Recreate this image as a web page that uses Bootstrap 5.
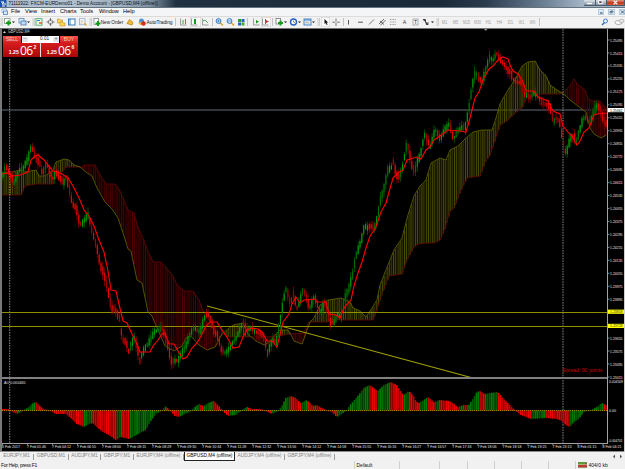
<!DOCTYPE html>
<html lang="en">
<head>
    <meta charset="UTF-8">
    <meta name="viewport" content="width=device-width, initial-scale=1.0">
    <title>FXCM-EURDemo01 - Demo Account</title>
    <link href="https://cdn.jsdelivr.net/npm/bootstrap@5.3.0/dist/css/bootstrap.min.css" rel="stylesheet">
    <style>
        body {
            font-family: "Liberation Sans", Arial, sans-serif;
            font-size: 5px;
            line-height: 1;
            color: #111;
            background: #f0f0f0;
            width: 625px;
            height: 469px;
            overflow: hidden;
            white-space: nowrap;
        }
        svg { display: block; }
        .titlebar {
            height: 8px;
            background: linear-gradient(90deg, #a9bccd 0, #b4c4d2 60px, #9fb0c0 120px, #7d91a3 150px, #1f3040 176px, #1b2a39 440px, #2a3b4d 485px, #6d8194 545px, #a3b4c5 582px, #9fb0c1 100%);
            border-bottom: 1px solid #66727d;
        }
        .win-btn { height: 6px; width: 11.5px; background: linear-gradient(#dde3ea, #8494a6); border: solid #4d5c6c; border-width: 0 1px 1px 0; }
        .win-close { width: 18px; background: linear-gradient(#e39b84, #c2381c 55%, #d85c36); }
        .menubar { height: 9px; background: #f4f5f7; border-bottom: 1px solid #dcdcdc; }
        .menu-items { display: grid; grid-template-columns: 14px 16px 19px 20px 19px 24px 20px; font-size: 5.6px; color: #000; }
        .mdi-btn { width: 6.5px; height: 6px; background: #dbe8f5; border: 1px solid #b7cbdf; }
        .toolbar { height: 11px; background: #f2f2f2; }
        .tool { height: 10px; flex: none; overflow: hidden; }
        .chart-area { height: 424px; background: #000; }
        .one-click { left: 3px; top: 8px; width: 75px; color: #fff; }
        .oc-btn { width: 18px; height: 7px; background: linear-gradient(#f4504b, #d0201f); color: #f3c9c6; font-size: 5px; }
        .oc-lot { height: 7px; background: #fff; color: #222; font-size: 4.6px; margin: 0 1px; }
        .oc-step { width: 6px; height: 5px; background: #e1e4e8; color: #555; }
        .oc-price { height: 14px; background: linear-gradient(#d51c1c, #a90808); font-size: 5.2px; font-weight: bold; padding: 0 2px 1.5px 4px; }
        .oc-big { font-size: 12px; line-height: 10px; font-weight: normal; font-family: "Open Sans", sans-serif; padding: 0 1px; letter-spacing: -.6px; }
        .oc-sup { font-size: 5px; padding-bottom: 6px; }
        .tabs-row { height: 9px; background: #f0f0f0; color: #808080; font-size: 4.85px; }
        .tab-item { height: 6px; border-right: 1px solid #9a9a9a; flex: none; }
        .tab-active { height: 8.5px; background: #fff; color: #000; border: 1px solid #222; border-top: 0; align-self: flex-start; padding-top: 1.5px; }
        .statusbar { height: 8px; background: #f1f1f1; font-size: 5px; }
        .help-hint { width: 354px; letter-spacing: -.3px; padding-left: 1px; }
        .status-cell { height: 8px; border-left: 1px solid #cfcfcf; padding-left: 1.5px; flex: none; }
    </style>
</head>
<body>
    <div class="titlebar d-flex align-items-center">
        <svg width="7" height="7" viewBox="0 0 7 7"><rect width="6.5" height="7" fill="#1c52b0"/><path d="M1 2h3l-2 2h4M2 6h3" stroke="#fff" fill="none"/></svg>
        <svg width="155" height="7"><text x="1.5" y="5.4" font-size="5.4" fill="#0a0f14" textLength="149" lengthAdjust="spacingAndGlyphs">71111922: FXCM-EURDemo01 - Demo Account - [GBPUSD,M4 (offline)]</text></svg>
        <div class="d-flex ms-auto align-self-start">
            <div class="win-btn d-flex align-items-center justify-content-center"><svg width="5" height="5"><path d="M0 3.5h5" stroke="#fff" stroke-width="1.3"/></svg></div>
            <div class="win-btn d-flex align-items-center justify-content-center"><svg width="5" height="5"><rect x=".7" y=".7" width="3.5" height="3" stroke="#fff" fill="#555"/></svg></div>
            <div class="win-btn win-close d-flex align-items-center justify-content-center"><svg width="5" height="5"><path d="M.7 .7l3.6 3.6M4.3 .7L.7 4.3" stroke="#fff" stroke-width="1.2"/></svg></div>
        </div>
    </div>
    <div class="menubar d-flex align-items-center">
        <svg width="11" height="8" viewBox="0 0 11 8"><rect x="2" y="1" width="4.5" height="3.5" fill="#fff" stroke="#86a9d0" stroke-width=".8"/><rect x="3.5" y="3" width="4" height="3.5" fill="#dbe9f8" stroke="#4b80bd" stroke-width=".8"/></svg>
        <div class="menu-items">
            <span>File</span><span>View</span><span>Insert</span><span>Charts</span><span>Tools</span><span>Window</span><span>Help</span>
        </div>
        <div class="d-flex ms-auto gap-0" id="mdi">
            <div class="mdi-btn me-1"><svg width="5" height="4"><path d="M1 3h2.5" stroke="#245"/></svg></div>
            <div class="mdi-btn"><svg width="5" height="4"><path d="M1 3V1.5h2V3zM2 1h2v1.5" stroke="#245" fill="none" stroke-width=".6"/></svg></div>
            <div class="mdi-btn ms-1"><svg width="5" height="4"><path d="M1 .5l3 3M4 .5l-3 3" stroke="#245" stroke-width=".8"/></svg></div>
        </div>
    </div>
    <div class="toolbar d-flex" id="toolbar"></div>

    <div class="chart-area position-relative">
        <svg id="chart" width="625" height="424" viewBox="0 28 625 424" font-family="Liberation Sans, Arial, sans-serif"></svg>
        <div class="one-click position-absolute">
            <div class="d-flex">
                <div class="oc-btn d-flex align-items-center justify-content-center">SELL</div>
                <div class="oc-lot d-flex align-items-center justify-content-between flex-grow-1 px-0">
                    <div class="oc-step d-flex align-items-center justify-content-center">-</div>
                    <span class="ms-auto">0.01</span>
                    <div class="oc-step d-flex align-items-center justify-content-center ms-1">+</div>
                </div>
                <div class="oc-btn d-flex align-items-center justify-content-center">BUY</div>
            </div>
            <div class="row g-0">
                <div class="col oc-price d-flex align-items-end justify-content-center">1.25<span class="oc-big">06</span><span class="oc-sup">2</span></div>
                <div class="col oc-price d-flex align-items-end justify-content-center border-start border-black">1.25<span class="oc-big">06</span><span class="oc-sup">6</span></div>
            </div>
        </div>
    </div>

    <div class="tabs-row d-flex align-items-center" id="tabs"></div>
    <div class="statusbar d-flex align-items-center" id="status"></div>

    <script>
        // ---------- toolbar ----------
        // each entry: [slot width, drawing inside a slot 10px high]
        const grip = '<path d="M1 1v8M2.5 1v8" stroke="#c3c3c3" stroke-width=".8"/>';
        const sep = '<path d="M1.5 1v8" stroke="#b5b5b5" stroke-width=".8"/>';
        const caret = '<path d="M0 4.4h3l-1.5 1.7z" fill="#111"/>';
        const axis = '<path d="M1.5 1.5v6.5h6" stroke="#7d8a84" fill="none" stroke-width=".8"/>';
        const press = w => `<rect x="0" y="0" width="${w}" height="10" fill="#fafafa" stroke="#bcbcbc" stroke-width=".8"/>`;
        const label = (t, x, w, c = '#111', s = 5.3) => `<text x="${x}" y="6.9" font-size="${s}" fill="${c}" textLength="${w}" lengthAdjust="spacingAndGlyphs">${t}</text>`;
        const tools = [
            [3, grip],
            [9, '<rect x="1.5" y="1.5" width="5.5" height="5" fill="#fff" stroke="#7c9886" stroke-width=".8"/><path d="M3 6h5M5.5 3.5v5" stroke="#159a1c" stroke-width="2"/>'],
            [6, caret],
            [9, '<rect x="1" y="1.5" width="5" height="4.5" fill="#e9f3ff" stroke="#5a85b5" stroke-width=".8"/><rect x="3" y="4" width="5" height="4" fill="#c4dcf5" stroke="#4175ae" stroke-width=".8"/>'],
            [5, caret],
            [3, grip],
            [10, '<rect x="1" y="1.7" width="6" height="6.5" fill="#e9fbe9" stroke="#38a35a" stroke-width=".8"/><path d="M2 3.5h3" stroke="#3b7bd0"/><path d="M4 6h3" stroke="#dd5a2b" stroke-width="1.5"/>'],
            [11, '<circle cx="5.5" cy="5" r="2.3" stroke="#777" fill="none" stroke-width=".8"/><path d="M5.5 1v3M5.5 6v3M1.5 5h3M6.5 5h3" stroke="#555" stroke-width=".8"/>'],
            [11, '<path d="M1.5 2h2l1 1h2v3h-5z" fill="#f6d46a" stroke="#c49722" stroke-width=".7"/><path d="M4 5h2l1 1h2v3H4z" fill="#ffd94f" stroke="#c49722" stroke-width=".7"/>'],
            [11, '<rect x="1.5" y="2" width="6.5" height="6" fill="#fff" stroke="#3a7ab9"/><path d="M3 2v6" stroke="#3a7ab9"/>'],
            [11, '<rect x="1.5" y="1.7" width="5.5" height="6" fill="#fff" stroke="#88aacc" stroke-width=".8"/><path d="M2.5 4h3M2.5 6h2" stroke="#b3977b" stroke-width=".8"/><path d="M6 6l2.5 2.5" stroke="#d2a72c" stroke-width="1.3"/>'],
            [3, grip],
            [33, '<rect x="2" y="1.5" width="4.5" height="6" fill="#fff" stroke="#778" stroke-width=".7"/><path d="M3.5 6.5h5M6 4v5" stroke="#159a1c" stroke-width="2"/>' + label('New Order', 8.7, 22.5)],
            [12, '<path d="M2 6.5l2.5-4 3.5 3-1 2.5z" fill="#f0bd38" stroke="#b57d17" stroke-width=".8"/>'],
            [37, '<circle cx="4.5" cy="4" r="2.5" fill="#4c93d8"/><path d="M1 5.5h6v2.5H3z" fill="#e8b83a"/><circle cx="6.5" cy="6.5" r="2.2" fill="#d9291c"/>' + label('AutoTrading', 9.5, 26)],
            [5, sep],
            [11, axis + '<path d="M4 3v4M6.5 2v5" stroke="#219536" stroke-width=".9"/>'],
            [11, press(11) + axis + '<path d="M5 2v5" stroke="#159a1c" stroke-width="2"/>'],
            [10, axis + '<path d="M2 4l2-1 3 3" stroke="#219536" fill="none" stroke-width=".8"/>'],
            [4, sep],
            [11, '<path d="M5 5.5l3 3" stroke="#d6a426" stroke-width="1.5"/><circle cx="3.5" cy="4" r="2.4" fill="#dcefff" stroke="#2e77c1"/><path d="M2.2 4h2.6M3.5 2.7v2.6" stroke="#2e77c1" stroke-width=".8"/>'],
            [12, '<path d="M5 5.5l3 3" stroke="#d6a426" stroke-width="1.5"/><circle cx="3.5" cy="4" r="2.4" fill="#dcefff" stroke="#2e77c1"/><path d="M2.2 4h2.6" stroke="#2e77c1" stroke-width=".8"/>'],
            [8, '<rect x="0" y="2" width="3" height="3" fill="#2a9c39"/><rect x="3.5" y="2" width="3" height="3" fill="#2464c2"/><rect x="0" y="5.5" width="3" height="3" fill="#2464c2"/><rect x="3.5" y="5.5" width="3" height="3" fill="#46a92e"/>'],
            [6, sep],
            [9, axis + '<path d="M4 3v3.5l3-1.7z" fill="#159a1c"/>'],
            [10, press(10) + axis + '<path d="M4.5 2v5" stroke="#3d6fb5"/><path d="M5 3v3l3-1.5z" fill="#c33"/>'],
            [4, sep],
            [9, '<rect x="1" y="1.5" width="4.5" height="5.5" fill="#fff" stroke="#777" stroke-width=".8"/><path d="M3 6h5M5.5 3.5v5" stroke="#159a1c" stroke-width="2"/>'],
            [5, caret],
            [9, '<circle cx="4.5" cy="5" r="3" fill="#fff" stroke="#2061c4" stroke-width="1.4"/><path d="M4.5 3.5V5l1.5 1" stroke="#555" fill="none" stroke-width=".7"/>'],
            [5, caret],
            [9, '<rect x="1" y="2" width="7" height="6" fill="#dceafa" stroke="#4b86c5"/><path d="M1 3h7" stroke="#4b86c5"/><path d="M2.5 6l1.5-1 2 1.5" stroke="#b68a41" fill="none" stroke-width=".7"/>'],
            [5, caret],
            [4, grip],
            [9, press(9) + '<path d="M3.5 2v5l1.2-1 1 2 .9-.4-1-2h1.5z" fill="#111"/>'],
            [12, '<path d="M6 1.5v3M6 6v3M2.3 5.2h3M6.8 5.2h3" stroke="#555" stroke-width=".8"/>'],
            [3, sep],
            [11, '<path d="M3.5 3v4.5" stroke="#444" stroke-width=".9"/>'],
            [12, '<path d="M2 5.2h5" stroke="#444" stroke-width=".9"/>'],
            [10, '<path d="M1 7.5l5-5" stroke="#555" stroke-width=".8"/>'],
            [11, '<path d="M1 7l5-5M2.5 8.2l5-5M2 4l4 3.5" stroke="#444" stroke-width=".8"/>'],
            [12, '<path d="M1 2.5h6M1 5h6M1 7.5h6" stroke="#777" stroke-width=".7" stroke-dasharray="1 .6"/>'],
            [11, label('A', 1.7, 3.5, '#333', 5.5)],
            [10, '<rect x="1" y="2" width="5" height="6" fill="none" stroke="#888" stroke-width=".6"/>' + label('T', 2, 3, '#333', 5)],
            [9, '<path d="M1 2.5l2.5 0 0 2zM3 4l3 3.5h-2M6 5v2.5" fill="#333" stroke="#333" stroke-width=".8"/>'],
            [5, caret],
            [3, grip]
        ];
        ['M1', 'M5', 'M15', 'M30', 'H1', 'H4', 'D1', 'W1', 'MN'].forEach(t => {
            const w = t.length > 2 ? 7 : 5.5;
            tools.push([11, label(t, 5.5 - w / 2, w, '#a2a2a2', 4.6)]);
        });
        tools.push([4, sep]);
        tools.push([13, '<path d="M3.5 5.5L1 8" stroke="#2a5fb0" stroke-width="1.3"/><circle cx="4.5" cy="4" r="2" fill="#eef6ff" stroke="#2a6fc9" stroke-width=".9"/>']);
        tools.push([11, '<ellipse cx="4.5" cy="5.5" rx="3.5" ry="2" fill="#fff" stroke="#8b8b8b" stroke-width=".7"/><ellipse cx="7.5" cy="4" rx="2.5" ry="1.6" fill="#e9e9e9" stroke="#999" stroke-width=".6"/>']);
        document.getElementById('toolbar').innerHTML = tools.map(([w, art], i) =>
            `<div class="tool${i === tools.length - 2 ? ' ms-auto' : ''}" style="width:${w}px"><svg width="${w}" height="10">${art}</svg></div>`).join('');

        // ---------- chart data (x, y pairs) ----------
        const pairs = s => s.trim().split(/\s+/).map(p => p.split(',').map(Number));
        const price = pairs(`2,176 6,167 10,176 14,183 19,170 22,170 28,158 31,146 33,152 36,160 39,162 42,174 46,164 50,172 52,179 56,173 60,179 63,183 66,177 69,190 72,204 76,208 79,222 81,225 84,220 88,215 92,232
            97,250 100,266 103,272 107,288 111,308 115,310 119,318 122,340 126,342 128,352 131,344 134,338 137,347 139,362 142,353 146,346 150,340 154,332 158,330 162,328 165,338 168,349 171,361 175,361 178,360 182,352
            185,347 189,336 193,328 197,330 200,332 204,318 207,313 211,322 214,332 218,337 221,350 225,353 228,350 232,343 236,338 240,328 243,322 247,330 251,328 255,332 260,333 264,338 267,353 272,340 276,342 279,326
            283,300 286,288 290,304 293,294 297,309 300,300 303,288 307,302 310,308 314,296 318,308 320,312 325,302 330,322 334,322 337,315 341,316 345,296 348,290 352,276 355,258 357,252 361,240 364,226 367,228 370,226
            374,228 377,218 380,200 384,187 388,168 390,170 393,162 396,175 399,177 402,168 406,146 408,147 411,164 414,172 417,162 420,155 424,135 427,140 430,147 434,132 436,130 440,140 444,130 449,124 453,139 458,130
            461,128 465,126 468,112 470,98 472,85 475,72 478,78 482,82 486,67 489,58 493,60 496,53 500,60 504,65 507,70 510,72 513,80 517,82 521,83 524,94 530,98 534,93 538,97 541,102 547,105 550,108 553,122 556,118
            560,124 562,140 564,150 566,153 568,145 571,136 574,137 576,142 579,131 583,118 586,118 590,122 594,110 597,105 600,110 603,120 606,124`);
        const redLine = pairs(`2,174 8,173 13,176 20,175 28,172 31,160 35,156 38,155 44,160 48,165 53,171 58,172 62,174 68,178 73,186 80,200 84,210 89,216 94,226 99,240 104,252 108,271 111,290 116,291 119,304 123,321
            127,323 132,334 137,344 140,352 150,352 153,346 158,340 162,334 165,333 169,344 174,344 178,351 183,359 187,357 192,348 197,343 201,336 206,326 210,322 217,322 222,330 227,337 233,348 239,347 243,337 247,330
            251,328 258,329 262,332 267,341 272,341 277,347 280,335 283,322 289,314 292,304 296,297 300,303 304,300 315,299 317,302 326,302 329,314 336,315 340,318 344,308 351,300 354,286 358,273 362,262 366,248 370,236
            375,229 378,221 381,212 386,203 389,192 393,178 398,173 403,170 407,160 411,159 416,157 421,159 426,150 430,147 434,140 440,136 448,130 460,131 466,132 470,118 475,98 479,92 483,80 489,69 493,66 498,60 503,57
            508,59 510,65 513,71 518,74 523,82 526,91 534,91 538,97 548,101 553,111 560,114 563,126 568,132 573,138 577,145 580,141 584,132 589,128 594,115 597,114 608,113`);
        const spanA = pairs(`2,173 12,172 20,170 25,172 36,170 39,176 44,176 52,172 56,162 64,159 69,160 74,165 80,167 86,172 92,176 97,188 105,202 112,209 118,218 124,236 128,249 131,251 137,280 142,283 148,312 152,316
            158,330 165,346 174,351 182,346 186,338 191,336 199,345 207,350 215,347 222,334 228,329 233,325 243,323 248,334 256,341 264,345 270,342 275,335 280,330 288,330 291,335 294,341 302,344 306,333 310,322 314,318
            320,305 328,300 341,298 350,302 353,308 360,311 366,317 372,308 377,300 380,285 388,265 394,250 402,238 404,230 408,215 414,196 420,186 426,180 431,163 440,158 446,160 450,150 458,146 466,138 473,132 482,130
            492,130 496,118 500,104 508,90 516,78 522,66 528,62 535,61 540,70 546,76 550,85 557,90 565,95 570,100 578,106 586,112 590,128 594,134 601,138 606,135`);
        const spanB = pairs(`2,195 21,195 25,186 36,184 53,184 54,174 62,172 66,167 82,167 84,165 95,165 100,175 106,184 115,184 120,191 128,210 134,213 138,228 142,236 147,249 153,262 161,262 170,272 173,276 177,285
            184,291 193,291 199,300 204,313 207,325 220,327 226,337 266,337 276,336 290,334 304,333 306,328 309,322 328,322 330,320 373,320 377,309 383,291 389,276 402,274 406,262 413,248 418,244 428,243 434,243 440,240
            445,228 450,211 454,208 460,192 467,178 480,176 485,162 490,155 495,140 500,125 508,120 516,112 522,108 526,98 534,94 560,94 566,90 571,84 574,79 577,84 585,90 588,99 592,101 600,101 605,107`);
        const ao = pairs(`2,409 8,409 12,412 16,414 20,412 25,409 28,407 32,403 35,402 38,405 42,408.5 50,411 55,414 65,414 70,418 76,424 83,427 88,424 92,423 97,428 102,432 108,435 115,440 120,437 128,439 134,436
            141,432 145,430 150,421 155,414 160,411 165,406.5 169,410 174,416 178,417 184,414 190,411 194,407 198,404 203,406 207,403 213,401 218,406 222,411 227,416 235,415 241,410 246,407 252,409 260,409 265,411 271,414
            277,411 281,406 285,398 290,396 295,398 300,403 306,400 312,406 316,405 321,408 326,410 331,412 336,417 341,414 346,410 350,404 357,396 363,388 369,385 377,391 383,385 390,382 396,385 401,393 403,395 408,391
            412,395 415,401 418,403 423,400 427,397 433,402 439,400 449,401 457,407 463,405 468,405 472,399 476,392 479,391 484,394 489,393 497,392 502,398 508,404 514,410 520,415 530,419 545,418 556,419 561,421 565,425
            569,427 573,422 578,419 583,412 590,410 596,407 601,403 607,406`);

        function at(points, x) {
            if (x <= points[0][0]) return points[0][1];
            for (let i = 1; i < points.length; i++) {
                if (x <= points[i][0]) {
                    const [x0, y0] = points[i - 1], [x1, y1] = points[i];
                    return y0 + (y1 - y0) * (x - x0) / (x1 - x0);
                }
            }
            return points[points.length - 1][1];
        }
        let seed = 7;
        const rnd = () => (seed = (seed * 16807) % 2147483647) / 2147483647;
        const line = (x1, y1, x2, y2, c, w = 1, extra = '') => `<line x1="${x1}" y1="${y1}" x2="${x2}" y2="${y2}" stroke="${c}" stroke-width="${w}" ${extra}/>`;
        const rect = (x, y, w, h, c) => `<rect x="${x.toFixed(2)}" y="${y.toFixed(2)}" width="${w}" height="${h.toFixed(2)}" fill="${c}"/>`;
        const poly = (pts, c, w) => `<polyline points="${pts.map(p => p.join()).join(' ')}" fill="none" stroke="${c}" stroke-width="${w}"/>`;
        const text = (t, x, y, w, c = '#e6e6e6', s = 4.3) => `<text x="${x}" y="${y + 1.5}" font-size="${s}" fill="${c}" textLength="${w}" lengthAdjust="spacingAndGlyphs">${t}</text>`;

        const step = 1.85;
        let out = '';
        out += line(2, 110, 607, 110, '#30363b', 2);

        // cloud hatching and its two edges
        for (let i = 0, x = 2.5; x < 607; x += step, i++) {
            const a = at(spanA, x), b = at(spanB, x);
            const up = a < b;
            const c = up ? (i % 3 ? '#4a4a00' : '#303000') : (i % 3 ? '#4c0000' : '#330000');
            out += rect(x, Math.min(a, b), 1.15, Math.abs(a - b), c);
        }
        out += poly(spanB, '#5c0808', .9) + poly(spanA, '#5c5c00', .9);

        // separators of the trading day
        out += line(9.7, 59, 9.7, 443, '#858585', 1, 'stroke-dasharray="1.6 1"');
        out += line(563, 29, 563, 443, '#858585', 1, 'stroke-dasharray="1.6 1"');

        // levels and trend line
        out += line(2, 312.5, 607, 312.5, '#8f8f00') + line(2, 326.5, 607, 326.5, '#8f8f00');
        out += line(207, 306, 471, 377.5, '#a3a300', 1.1);

        // candles
        for (let i = 0, x = 2.5; x < 607; x += step, i++) {
            const y = at(price, x), slope = at(price, x + 2) - at(price, x - 2);
            const up = slope + (rnd() - .5) * 9 < 0;
            const dim = rnd() < .4;
            const body = 2 + rnd() * 4 + Math.min(Math.abs(slope) * .35, 4);
            const top = y - body / 2 - rnd() * 5, bottom = y + body / 2 + rnd() * 5;
            out += rect(x, top, .8, bottom - top, up ? '#006000' : '#900000');
            out += rect(x - .1, y - body / 2, 1.15, body, up ? (dim ? '#006c00' : '#009a08') : (dim ? '#a00000' : '#ee0000'));
        }
        out += poly(redLine, '#f80000', 1.15);

        // oscillator
        for (let i = 0, x = 2; x < 606; x += step, i++) {
            const y = at(ao, x), up = at(ao, x + .6) < at(ao, x - 1.2);
            const strong = i % 4 < 2;
            out += rect(x, Math.min(y, 410.5), 1.65, Math.max(Math.abs(y - 410.5), .6), up ? (strong ? '#007a00' : '#005c00') : (strong ? '#f00000' : '#c40000'));
        }
        out += line(2, 410.6, 607, 410.6, '#c9a400', .8, 'stroke-dasharray="1.2 .8"');

        // frame and axes
        out += rect(0, 28, 2, 424, '#787878') + rect(0, 28, 625, 1, '#747474') + rect(0, 451, 625, 1, '#8c8c8c');
        out += rect(2, 377, 606, 2, '#808080') + rect(607, 29, 1, 415, '#a2a2a2') + rect(2, 443, 606, 1, '#a2a2a2') + rect(624, 28, 1, 424, '#d0d0d0');
        out += '<path d="M484 29h3.5l-1.7 2z" fill="#8a949c"/>';

        // price scale
        for (let i = -1; i <= 25; i++) {
            const y = 53 + i * 12.96, v = (1.25415 - i * 0.0008).toFixed(5);
            if (i === 20 || i === 21) continue;
            out += line(608, y, 609.5, y, '#a2a2a2', .8) + text(v, 610, y, 12.5);
        }
        out += rect(608, 108, 16, 4.2, '#fff') + text('1.25062', 610, 110.1, 12.5, '#000');
        out += rect(608, 309.6, 16, 4.2, '#ff0') + text('1.23818', 610, 311.7, 12.5, '#333');
        out += rect(608, 323.8, 16, 4.2, '#ff0') + text('1.23728', 610, 325.9, 12.5, '#333');
        out += text('0.004509', 609, 381.5, 14) + text('0.00', 609, 410.6, 7) + text('-0.004701', 608.5, 440.7, 14);

        // time scale
        ['6 Feb 2017', '7 Feb 01:46', '7 Feb 04:12', '7 Feb 06:55', '7 Feb 08:00', '7 Feb 08:15', '7 Feb 08:29', '7 Feb 09:30', '7 Feb 10:34',
            '7 Feb 11:28', '7 Feb 12:32', '7 Feb 13:56', '7 Feb 14:12', '7 Feb 14:58', '7 Feb 15:55', '7 Feb 16:16', '7 Feb 16:27', '7 Feb 16:57',
            '7 Feb 17:33', '7 Feb 18:06', '7 Feb 18:18', '7 Feb 19:25', '7 Feb 23:13', '8 Feb 01:15', '8 Feb 04:21'].forEach((t, i) => {
            const x = 2 + i * 25.02;
            out += line(x + .5, 443, x + .5, 445.5, '#a2a2a2', .8) + text(t, x, 446.9, i ? 19 : 18);
        });

        out += '<path d="M3 33h3l-1.5-2z" fill="#ddd"/>';
        out += text('GBPUSD,M4', 8, 31.9, 21.5, '#d8d8d8', 4.6);
        out += text('AO 0.000465', 4, 382, 21.5);
        out += text('Spread: 90 points', 562.5, 370.8, 40, '#c80000', 5);
        document.getElementById('chart').innerHTML = out;

        // ---------- tabs and status bar ----------
        const tabs = [[34, 'EURJPY,M1'], [35, 'GBPUSD,M1'], [32, 'AUDJPY,M1'], [33, 'GBPJPY,M1'], [50, 'EURJPY,M4 (offline)'],
            [51, 'GBPUSD,M4 (offline)'], [50, 'AUDJPY,M4 (offline)'], [50, 'GBPJPY,M4 (offline)']];
        document.getElementById('tabs').innerHTML = tabs.map(([w, t], i) =>
            `<div class="tab-item d-flex align-items-center justify-content-center ${i === 5 ? 'tab-active' : ''}" style="width:${w}px">${t}</div>`).join('') +
            '<svg class="ms-auto" width="14" height="7"><path d="M4 1.5v4L2 3.5zM9 1.5v4l2-2z" fill="#555"/></svg>';

        const cells = [[45, 'Default'], [40, ''], [28, ''], [27, ''], [27, ''], [27, ''], [27, '']];
        document.getElementById('status').innerHTML = '<div class="help-hint flex-shrink-0">For Help, press F1</div>' +
            cells.map(([w, t]) => `<div class="status-cell d-flex align-items-center" style="width:${w}px">${t}</div>`).join('') +
            `<div class="status-cell d-flex align-items-center"><svg width="11" height="6"><rect width="9" height="5.5" fill="#5d9a3d"/><path d="M0 3l5 0 4-2v4.5H0z" fill="#b9403a"/><path d="M0 2.5h9" stroke="#d9c9a0" stroke-width=".6"/></svg>404/0 kb</div>`;
    </script>
    <script src="https://cdn.jsdelivr.net/npm/bootstrap@5.3.0/dist/js/bootstrap.bundle.min.js"></script>
</body>
</html>
